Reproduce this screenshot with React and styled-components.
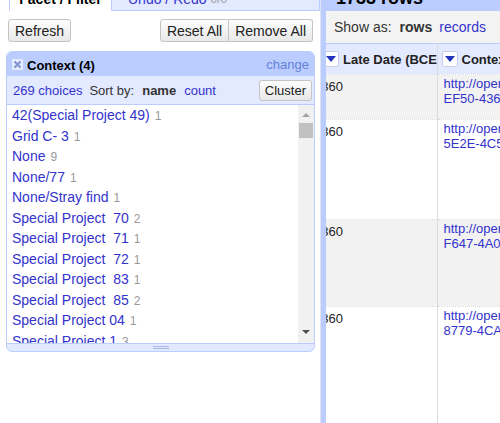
import React, { useLayoutEffect, useRef } from 'react';
import styled, { createGlobalStyle } from 'styled-components';

const GlobalStyle = createGlobalStyle`
  html, body {
    margin: 0;
    padding: 0;
    background: #fff;
    overflow: hidden;
  }
  body {
    font-family: "Liberation Sans", Arial, sans-serif;
    font-size: 13px;
    color: #222;
  }
`;

const blue = '#bbccff';
const paleBlue = '#e3e9ff';
const linkBlue = '#3333cc';

// Page is scrolled a little, so the tab labels are cut at the top
const Page = styled.div`
  display: flex;
  height: 435px;
  margin-top: -12px;
`;

const LeftPanel = styled.div`
  width: 320px;
  border-right: 1px solid #dfe4f5;
  display: flex;
  flex-direction: column;
`;

const TabBar = styled.div`
  display: flex;
  height: 23px;
  padding-left: 9px;
`;

const Tab = styled.div`
  box-sizing: border-box;
  height: 23px;
  display: flex;
  align-items: flex-start;
  padding-top: 3px;
  line-height: 14px;
  justify-content: ${p => (p.$active ? 'center' : 'flex-start')};
  padding-left: ${p => (p.$active ? '0' : '16px')};
  width: ${p => (p.$active ? '103px' : 'auto')};
  flex: ${p => (p.$active ? 'none' : '1')};
  background: ${p => (p.$active ? '#fff' : paleBlue)};
  border: 1px solid ${blue};
  border-bottom: ${p => (p.$active ? '1px solid #fff' : `1px solid ${blue}`)};
  border-left: ${p => (p.$active ? `1px solid ${blue}` : 'none')};
  font-size: 14px;
  font-weight: ${p => (p.$active ? 'bold' : 'normal')};
  color: ${p => (p.$active ? '#000' : linkBlue)};
`;

const Muted = styled.span`
  color: #999;
  margin-left: 4px;
  font-size: 12px;
`;

const ButtonRow = styled.div`
  display: flex;
  justify-content: space-between;
  padding: 8px 7px 0 8px;
`;

const ButtonGroup = styled.div`
  display: flex;
`;

const Button = styled.button`
  box-sizing: border-box;
  height: ${p => (p.$small ? '21px' : '23px')};
  padding: 0 ${p => (p.$small ? '5px' : '6px')};
  font-family: "Liberation Sans", Arial, sans-serif;
  font-size: ${p => (p.$small ? '13px' : '14px')};
  color: #222;
  background: linear-gradient(#fdfdfd, #e8e8e8);
  border: 1px solid #c4c4c4;
  border-left: ${p => (p.$joined ? 'none' : '1px solid #c4c4c4')};
  border-radius: ${p => p.$radius || '3px'};
  cursor: pointer;
`;

const Facet = styled.div`
  margin: 9px 5px 0 6px;
  border: 1px solid ${blue};
  border-radius: 6px;
  overflow: hidden;
  background: ${paleBlue};
`;

const FacetTitle = styled.div`
  display: flex;
  align-items: center;
  gap: 4px;
  height: 24px;
  padding: 0 5px;
  background: ${blue};
`;

const Title = styled.span`
  font-weight: bold;
  font-size: 13px;
  color: #000;
  padding-top: 2px;
`;

const Change = styled.span`
  color: #6584d6;
  font-size: 13px;
  margin-left: auto;
`;

const FacetControls = styled.div`
  display: flex;
  align-items: center;
  height: 28px;
  padding: 0 2px 0 6px;
  border-bottom: 1px solid ${blue};
`;

const Link = styled.span`
  color: ${linkBlue};
  margin-right: ${p => p.$gap || '0'};
`;

const Label = styled.span`
  color: #333;
  margin-right: ${p => p.$gap || '0'};
  font-weight: ${p => (p.$bold ? 'bold' : 'normal')};
`;

const ClusterButton = styled(Button)`
  margin-left: auto;
`;

const ChoiceBox = styled.div`
  display: flex;
  height: 238px;
  background: #fff;
`;

const ChoiceList = styled.div`
  flex: 1;
  overflow: hidden;
  padding-left: 5px;
`;

const Choice = styled.div`
  height: 20.5px;
  line-height: 20.5px;
  white-space: pre;
  font-size: 14px;
  color: ${linkBlue};
`;

const Count = styled.span`
  color: #999;
  font-size: 12px;
  margin-left: 5px;
`;

const ScrollBar = styled.div`
  width: 16px;
  background: #f1f1f1;
  display: flex;
  flex-direction: column;
  align-items: center;
`;

const Arrow = styled.div`
  width: 0;
  height: 0;
  border-left: 4px solid transparent;
  border-right: 4px solid transparent;
  ${p =>
    p.$down
      ? 'border-top: 4px solid #505050; margin-bottom: 9px;'
      : 'border-bottom: 4px solid #a3a3a3; margin-top: 8px;'}
`;

const Thumb = styled.div`
  width: 14px;
  height: 15px;
  background: #c1c1c1;
  margin-top: 6px;
`;

const Track = styled.div`
  flex: 1;
`;

const Grip = styled.div`
  height: 7px;
  display: flex;
  align-items: center;
  justify-content: center;
  border-top: 1px solid ${blue};
`;

const GripLines = styled.div`
  width: 16px;
  height: 1px;
  border-top: 1px solid #a9b8e8;
  border-bottom: 1px solid #a9b8e8;
`;

const RightPanel = styled.div`
  flex: 1;
  min-width: 0;
  border-left: 5px solid ${blue};
  display: flex;
  flex-direction: column;
`;

const Summary = styled.div`
  height: 23px;
  background: ${blue};
  padding-left: 10px;
  font-size: 18px;
  font-weight: bold;
  line-height: 20px;
  color: #000;
  overflow: hidden;
`;

const ShowAs = styled.div`
  height: 32px;
  display: flex;
  align-items: center;
  padding-left: 8px;
  background: #f3f3f3;
  font-size: 14px;
`;

const TableScroll = styled.div`
  flex: 1;
  overflow: hidden;
`;

const Table = styled.table`
  border-collapse: collapse;
  table-layout: fixed;
  width: 421px;
`;

const HeadCell = styled.th`
  height: 30px;
  background: ${paleBlue};
  border-top: 1px solid ${blue};
  border-right: 1px solid #dcdcdc;
  text-align: left;
  padding: 0 0 0 4px;
  font-size: 13px;
  white-space: nowrap;
  overflow: hidden;
`;

const HeadInner = styled.div`
  display: flex;
  align-items: center;
  gap: 4px;
  overflow: hidden;
`;

const HiddenCol = styled.span`
  width: ${p => p.$w}px;
  flex: none;
  display: inline-block;
  overflow: hidden;
`;

const DropButton = styled.span`
  box-sizing: border-box;
  display: inline-flex;
  align-items: center;
  justify-content: center;
  width: 16px;
  height: 16px;
  background: #fff;
  border: 1px solid #c7cde6;
  border-radius: 2px;
  flex: none;
`;

const Row = styled.tr`
  background: ${p => (p.$odd ? '#f2f2f2' : '#fff')};
  border-top: 1px dotted #dddddd;
`;

const Cell = styled.td`
  height: ${p => p.$h - 2}px;
  vertical-align: top;
  padding: 1px 4px 0 6px;
  border-right: 1px solid #dcdcdc;
  font-size: 13px;
  line-height: 15px;
  color: #222;
  overflow: hidden;
  white-space: nowrap;
`;

const UrlLines = styled.div`
  color: ${linkBlue};
  line-height: 15px;
`;

const CloseIcon = () => (
  <svg width="11" height="11" viewBox="0 0 11 11">
    <rect width="11" height="11" fill="#e4eaff" />
    <path d="M2.5 2.5 L8.5 8.5 M8.5 2.5 L2.5 8.5" stroke="#7f94cc" strokeWidth="2" />
  </svg>
);

const Triangle = () => (
  <svg width="10" height="6" viewBox="0 0 10 6">
    <path d="M0 0 H10 L5 6 Z" fill="#2233bb" />
  </svg>
);

const choices = [
  ['42(Special Project 49)', 1],
  ['Grid C- 3', 1],
  ['None', 9],
  ['None/77', 1],
  ['None/Stray find', 1],
  ['Special Project  70', 2],
  ['Special Project  71', 1],
  ['Special Project  72', 1],
  ['Special Project  83', 1],
  ['Special Project  85', 2],
  ['Special Project 04', 1],
  ['Special Project 1', 3],
];

const rows = [
  { h: 45, date: '1360', tail: 'EF50-436E-9C21' },
  { h: 100, date: '1360', tail: '5E2E-4C54-8B1A' },
  { h: 87, date: '1360', tail: 'F647-4A0E-93D2' },
  { h: 120, date: '1360', tail: '8779-4CA7-A1F0' },
];

const App = () => {
  const tableRef = useRef(null);

  // the grid is scrolled sideways, first columns are out of view
  useLayoutEffect(() => {
    if (tableRef.current) tableRef.current.scrollLeft = 131;
  }, []);

  return (
    <>
      <GlobalStyle />
      <Page>
        <LeftPanel>
          <TabBar>
            <Tab $active>Facet / Filter</Tab>
            <Tab>
              Undo / Redo<Muted>0/0</Muted>
            </Tab>
          </TabBar>

          <ButtonRow>
            <Button>Refresh</Button>
            <ButtonGroup>
              <Button $radius="3px 0 0 3px">Reset All</Button>
              <Button $radius="0 3px 3px 0" $joined>
                Remove All
              </Button>
            </ButtonGroup>
          </ButtonRow>

          <Facet>
            <FacetTitle>
              <CloseIcon />
              <Title>Context (4)</Title>
              <Change>change</Change>
            </FacetTitle>
            <FacetControls>
              <Link $gap="7px">269 choices</Link>
              <Label $gap="8px">Sort by:</Label>
              <Label $bold $gap="8px">name</Label>
              <Link>count</Link>
              <ClusterButton $small>Cluster</ClusterButton>
            </FacetControls>
            <ChoiceBox>
              <ChoiceList>
                {choices.map(([name, count]) => (
                  <Choice key={name}>
                    {name}
                    <Count>{count}</Count>
                  </Choice>
                ))}
              </ChoiceList>
              <ScrollBar>
                <Arrow />
                <Thumb />
                <Track />
                <Arrow $down />
              </ScrollBar>
            </ChoiceBox>
            <Grip>
              <GripLines />
            </Grip>
          </Facet>
        </LeftPanel>

        <RightPanel>
          <Summary>1733 rows</Summary>
          <ShowAs>
            <Label $gap="8px">Show as:</Label>
            <Label $bold $gap="7px">rows</Label>
            <Link>records</Link>
          </ShowAs>
          <TableScroll ref={tableRef}>
            <Table>
              <colgroup>
                <col style={{ width: 242 }} />
                <col style={{ width: 179 }} />
              </colgroup>
              <thead>
                <tr>
                  <HeadCell>
                    <HeadInner>
                      <HiddenCol $w={120}>Early Date</HiddenCol>
                      <DropButton>
                        <Triangle />
                      </DropButton>
                      Late Date (BCE/CE)
                    </HeadInner>
                  </HeadCell>
                  <HeadCell>
                    <HeadInner>
                      <DropButton>
                        <Triangle />
                      </DropButton>
                      Context URI
                    </HeadInner>
                  </HeadCell>
                </tr>
              </thead>
              <tbody>
                {rows.map((r, i) => (
                  <Row key={i} $odd={i % 2 === 0}>
                    <Cell $h={r.h}>
                      <HiddenCol $w={113}>-1200</HiddenCol>
                      {r.date}
                    </Cell>
                    <Cell $h={r.h}>
                      <UrlLines>
                        http://opencontext.org/subjects/
                        <br />
                        {r.tail}
                      </UrlLines>
                    </Cell>
                  </Row>
                ))}
              </tbody>
            </Table>
          </TableScroll>
        </RightPanel>
      </Page>
    </>
  );
};

export default App;
